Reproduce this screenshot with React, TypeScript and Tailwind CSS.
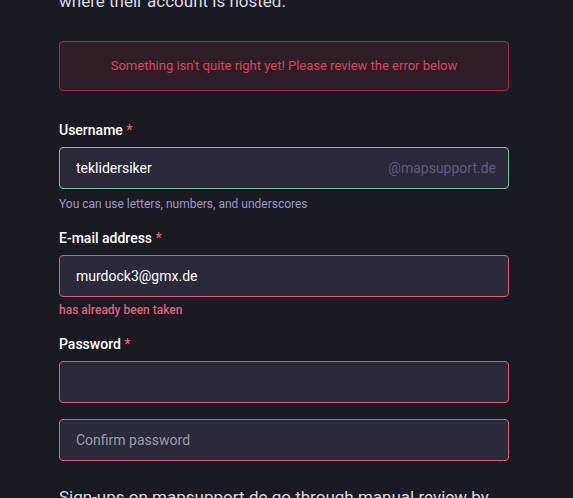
import React from "react";

const font = {fontFamily: "Roboto, 'Noto Sans', sans-serif"};

function Label({text}: {text: string}) {
  return (
    <label className="block text-sm leading-5 font-medium text-white mb-[7px]">
      {text} <span className="text-[#e0607a]">*</span>
    </label>
  );
}

export default function App() {
  return (
    <div
      className="w-full min-h-[498px] h-[498px] overflow-hidden bg-[#191a22]"
      style={font}
    >
      <div className="w-[450px] ml-[59px] -mt-[11px]">
        <p className="text-[17px] leading-6 text-[#d9d9e0]">
          where their account is hosted.
        </p>

        <div className="mt-[28px] rounded border border-[#a32e48] bg-[#2d1d27] py-[15px] text-center text-[13px] leading-[18px] font-normal text-[#e0405e]">
          Something isn't quite right yet! Please review the error below
        </div>

        <div className="mt-[29px]">
          <Label text="Username" />
          <div className="flex h-[42px] items-center rounded border border-[#79bd9a] bg-[#2a2a38] px-4">
            <input
              className="flex-1 bg-transparent text-sm text-white outline-none"
              defaultValue="teklidersiker"
            />
            <span className="text-sm text-[#5c5c7e] -mr-[4px]">@mapsupport.de</span>
          </div>
          <p className="mt-[7px] text-xs leading-4 text-[#9a99c2]">
            You can use letters, numbers, and underscores
          </p>
        </div>

        <div className="mt-4">
          <Label text="E-mail address" />
          <input
            className="block w-full h-[42px] rounded border border-[#df5a73] bg-[#2a2a38] px-4 text-sm text-white outline-none"
            defaultValue="murdock3@gmx.de"
          />
          <p className="mt-[5px] text-xs leading-4 font-medium text-[#e0607a]">
            has already been taken
          </p>
        </div>

        <div className="mt-4">
          <Label text="Password" />
          <input
            type="password"
            className="block w-full h-[42px] rounded border border-[#df5a73] bg-[#2a2a38] px-4 text-sm text-white outline-none"
          />
          <input
            type="password"
            placeholder="Confirm password"
            className="mt-4 block w-full h-[42px] rounded border border-[#df5a73] bg-[#2a2a38] px-4 text-sm text-white outline-none placeholder:text-[#9a9aa8]"
          />
        </div>

        <p className="mt-[24px] text-[17px] leading-6 text-[#d9d9e0]">
          Sign-ups on mapsupport.de go through manual review by our moderators.
        </p>
      </div>
    </div>
  );
}
